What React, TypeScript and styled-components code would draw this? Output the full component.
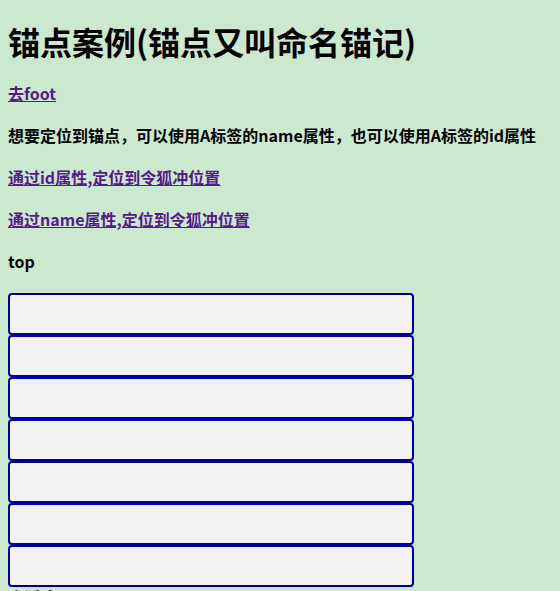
import { FC } from 'react'
import styled, { createGlobalStyle } from 'styled-components'

const GlobalStyle = createGlobalStyle`
  html, body {
    background: #cce8cf;
  }
  body {
    margin: 0 8px 8px;
    font-family: "Noto Sans CJK SC", "Noto Sans", sans-serif;
    color: #000;
  }
`

const Title = styled.h1`
  font-size: 32px;
  line-height: 42px;
  font-weight: 700;
  margin: 20px 0 21px;
`

const Heading = styled.h4`
  font-size: 16px;
  line-height: 21px;
  font-weight: 700;
  margin: 21px 0;
`

const Link = styled.a`
  color: #551a8b;
  text-decoration: underline;
`

const Box = styled.div`
  width: 402px;
  height: 38px;
  background: #f2f2f2;
  border: 2px solid #0000a0;
  border-radius: 4px;
`

const Tail = styled.div`
  font-size: 16px;
  line-height: 21px;
  font-weight: 700;
`

const boxes = [1, 2, 3, 4, 5, 6, 7]

const App: FC = () => {
  return (
    <>
      <GlobalStyle />
      <Title>锚点案例(锚点又叫命名锚记)</Title>
      <Heading>
        <Link href='#foot'>去foot</Link>
      </Heading>
      <Heading>想要定位到锚点，可以使用A标签的name属性，也可以使用A标签的id属性</Heading>
      <Heading>
        <Link href='#linghuchong'>通过id属性,定位到令狐冲位置</Link>
      </Heading>
      <Heading>
        <Link href='#lhc'>通过name属性,定位到令狐冲位置</Link>
      </Heading>
      <Heading id='top'>top</Heading>
      {boxes.map(n => (
        <Box key={n} />
      ))}
      <Tail>令狐冲</Tail>
    </>
  )
}

export default App
